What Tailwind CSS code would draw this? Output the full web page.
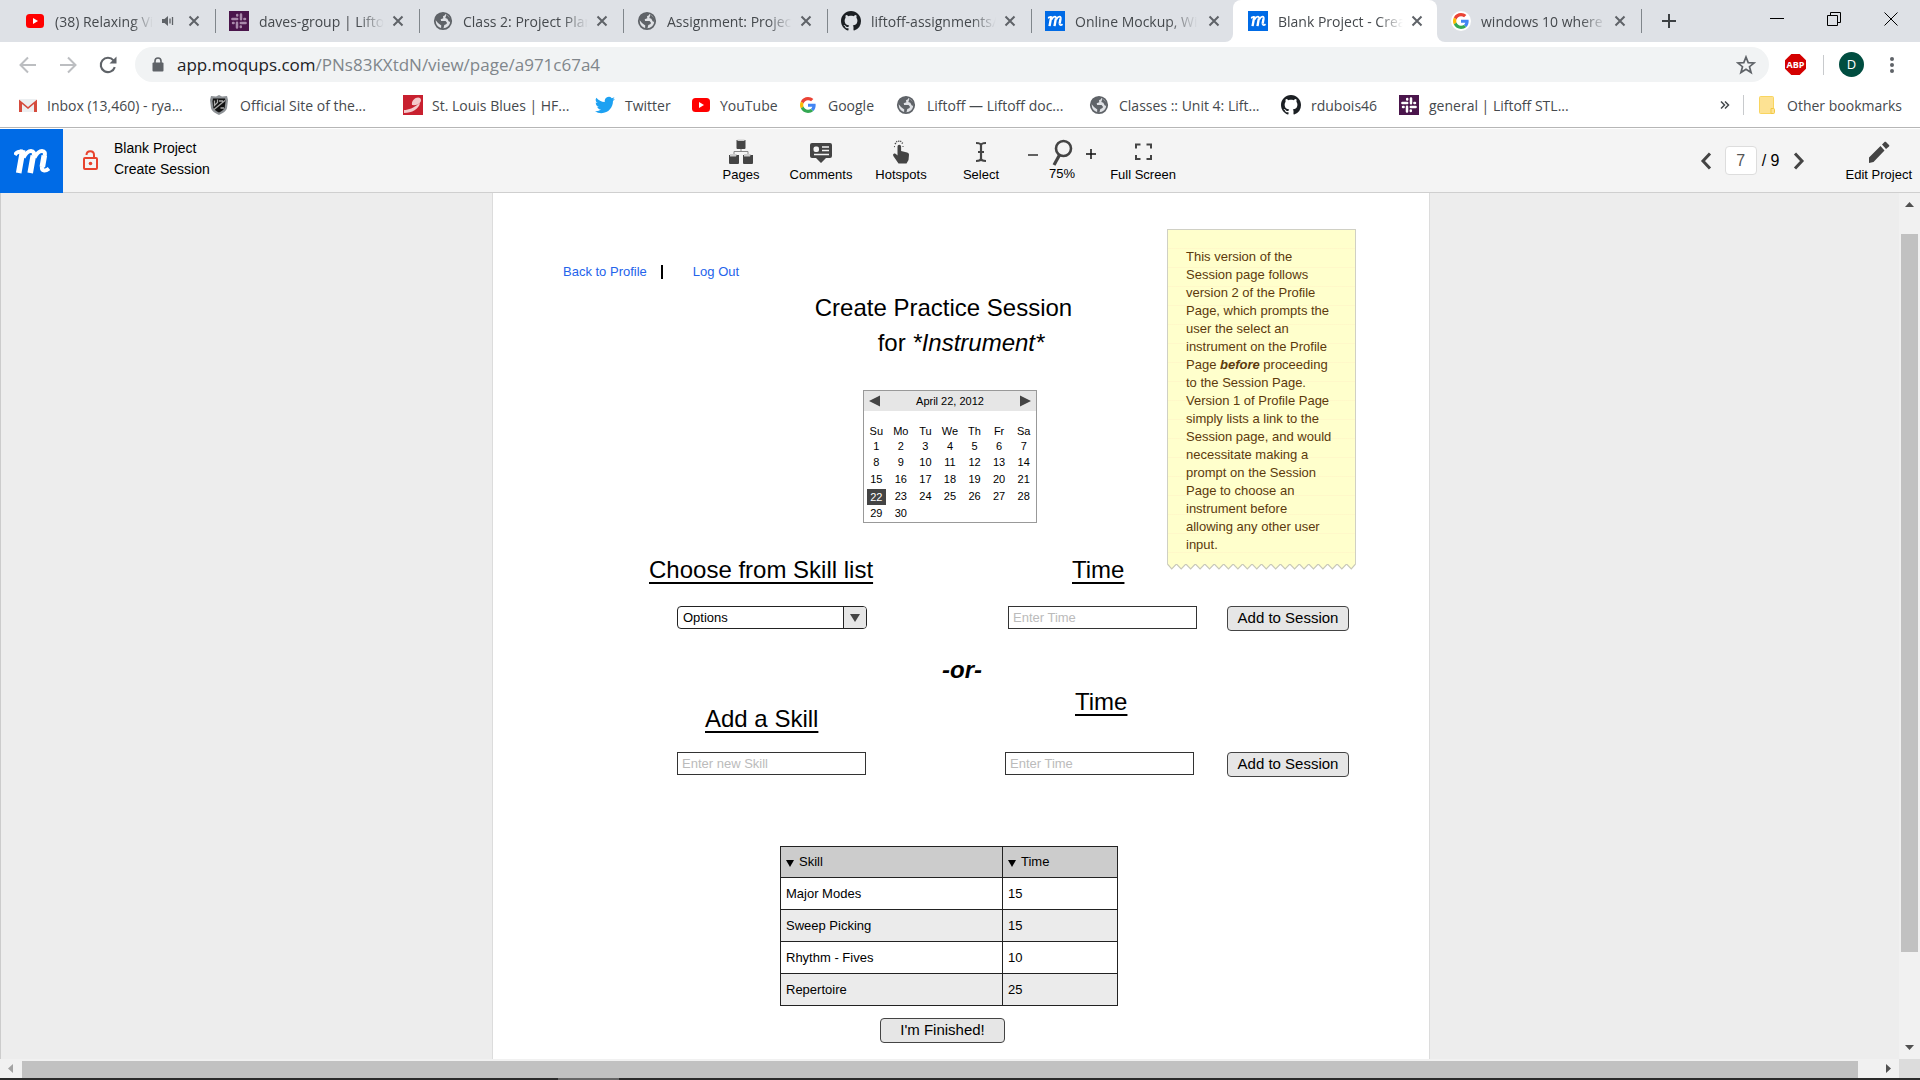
<!DOCTYPE html>
<html lang="en">
<head>
<meta charset="utf-8">
<title>Blank Project - Create Session</title>
<script src="https://cdn.jsdelivr.net/npm/@tailwindcss/browser@4"></script>
</head>
<body class="flex h-screen flex-col overflow-hidden bg-white font-['Liberation_Sans',Arial,sans-serif] text-black">

<!-- Shared icons -->
<svg class="hidden" aria-hidden="true">
  <symbol id="close" viewBox="0 0 12 12"><path d="M1.5 1.5l9 9M10.5 1.5l-9 9" stroke="#5f6368" stroke-width="2" fill="none"/></symbol>
  <symbol id="youtube" viewBox="0 0 20 20"><rect x="1" y="3" width="18" height="14" rx="3.5" fill="#f00"/><path d="M8 7l5 3-5 3z" fill="#fff"/></symbol>
  <symbol id="slack" viewBox="0 0 20 20"><rect width="20" height="20" fill="#4a154b"/><path d="M3.400 8h4.800M8.200 4v.6M12 3.400v4.800M16 8h-.6M16.600 12h-4.800M11.800 16v-.6M8 16.600v-4.800M4 12h.6" fill="none" stroke="#fff" stroke-width="2.500" stroke-linecap="round"/></symbol>
  <symbol id="slackdim" viewBox="0 0 20 20"><rect width="20" height="20" fill="#4a154b"/><path d="M3.400 8h4.800M8.200 4v.6M12 3.400v4.800M16 8h-.6M16.600 12h-4.800M11.800 16v-.6M8 16.600v-4.800M4 12h.6" fill="none" stroke="#a98aab" stroke-width="2.500" stroke-linecap="round"/></symbol>
  <symbol id="globe" viewBox="0 0 20 20"><circle cx="10" cy="10" r="8.2" fill="#dfe1e5" stroke="#5f6368" stroke-width="1.8"/><path d="M3 5.500C5 3 8 1.500 11.500 2l.8 2-2.300 1.300.3 1.900-2.600 1 .4 1.800h4.500l1.500 2-1 1.300-1.800.8-.8 3.200-1.700.8C8 18 8 16 8.300 14.500L5 12l-2.500-3zM13.500 3.500l3.800 3.700.5 3.800-2-.5-1.500-2.800-2-.6z" fill="#5f6368"/></symbol>
  <symbol id="github" viewBox="0 0 16 16"><path fill="#1b1f23" d="M8 0C3.580 0 0 3.580 0 8c0 3.540 2.290 6.530 5.470 7.590.4.070.55-.17.55-.38 0-.19-.01-.82-.01-1.490-2.010.37-2.530-.49-2.690-.94-.09-.23-.48-.94-.82-1.130-.28-.15-.68-.52-.01-.53.63-.01 1.080.58 1.230.82.72 1.210 1.870.87 2.330.66.07-.52.28-.87.51-1.070-1.780-.2-3.640-.89-3.640-3.950 0-.87.31-1.590.82-2.150-.08-.2-.36-1.020.08-2.120 0 0 .67-.21 2.200.82.64-.18 1.320-.27 2-.27s1.360.09 2 .27c1.530-1.040 2.200-.82 2.200-.82.44 1.100.16 1.920.08 2.120.51.56.82 1.270.82 2.150 0 3.070-1.870 3.750-3.650 3.950.29.25.54.73.54 1.480 0 1.070-.01 1.930-.01 2.200 0 .21.15.46.55.38A8.010 8.010 0 0 0 16 8c0-4.420-3.580-8-8-8z"/></symbol>
  <symbol id="google" viewBox="0 0 48 48"><path fill="#ea4335" d="M24 9.500c3.540 0 6.710 1.220 9.210 3.600l6.850-6.850C35.900 2.380 30.470 0 24 0 14.620 0 6.510 5.380 2.560 13.220l7.980 6.190C12.430 13.720 17.740 9.500 24 9.500z"/><path fill="#4285f4" d="M46.980 24.550c0-1.570-.15-3.090-.38-4.550H24v9.020h12.940c-.58 2.960-2.260 5.480-4.780 7.180l7.730 6c4.510-4.180 7.090-10.360 7.090-17.650z"/><path fill="#fbbc05" d="M10.530 28.590c-.48-1.450-.76-2.990-.76-4.590s.27-3.140.76-4.590l-7.980-6.190C.92 16.460 0 20.120 0 24s.92 7.540 2.560 10.780z"/><path fill="#34a853" d="M24 48c6.480 0 11.930-2.130 15.890-5.810l-7.730-6c-2.150 1.450-4.920 2.300-8.160 2.300-6.260 0-11.570-4.220-13.470-9.910l-7.980 6.190C6.510 42.620 14.620 48 24 48z"/></symbol>
  <!-- Product mark: slanted stems, thinner arches, entry and exit strokes -->
  <symbol id="mark" viewBox="0 0 36 28"><g fill="none" stroke="#fff" stroke-linejoin="round"><path d="M8.800 3L4.700 26M19.300 8.500L16.200 26M30.300 8.500L28.300 20" stroke-width="5.600"/><path d="M.8 8c1.500-2.600 4.500-3.600 8-3.400M9.500 10.500C12 6 14.500 4 17 4c2.800 0 3.300 2 2.600 5M20.500 10.500C23 6 25.500 4 28 4c2.800 0 3.300 2 2.600 5M28 19.500c-.6 4.500 3 5.300 7 2" stroke-width="4"/></g></symbol>
  <symbol id="mq" viewBox="0 0 20 20"><rect width="20" height="20" fill="#006be6"/><svg x="2.500" y="4" width="15.500" height="12"><use href="#mark"/></svg></symbol>
</svg>

<!-- Tab strip -->
<header class="flex h-[42px] shrink-0 bg-[#dee1e6] pl-[11px] font-['Open_Sans','Noto_Sans',sans-serif] text-[14px] text-[#45494d]">
  <div class="flex w-51 items-center pl-[14px]">
    <svg class="size-5 shrink-0"><use href="#youtube"/></svg>
    <span class="ml-[10px] w-[98px] overflow-hidden whitespace-nowrap [mask-image:linear-gradient(to_right,#000_78%,transparent)]">(38) Relaxing Violin</span>
    <svg class="ml-[8px] size-[14px] shrink-0" viewBox="0 0 14 14"><path d="M1 5h2.500L7 2v10L3.500 9H1z" fill="#5f6368"/><path d="M9 4.500v5M11.500 3v8" stroke="#5f6368" stroke-width="1.300"/></svg>
    <button class="ml-[13px]" aria-label="Close tab"><svg class="size-3"><use href="#close"/></svg></button>
  </div>
  <div class="flex w-51 items-center">
    <i class="h-6 w-px bg-[#80868b]"></i>
    <svg class="ml-[13px] size-5 shrink-0"><use href="#slackdim"/></svg>
    <span class="ml-[10px] w-[125px] overflow-hidden whitespace-nowrap [mask-image:linear-gradient(to_right,#000_80%,transparent)]">daves-group | Liftoff</span>
    <button class="ml-[8px]" aria-label="Close tab"><svg class="size-3"><use href="#close"/></svg></button>
  </div>
  <div class="flex w-51 items-center">
    <i class="h-6 w-px bg-[#80868b]"></i>
    <svg class="ml-[13px] size-5 shrink-0"><use href="#globe"/></svg>
    <span class="ml-[10px] w-[125px] overflow-hidden whitespace-nowrap [mask-image:linear-gradient(to_right,#000_80%,transparent)]">Class 2: Project Planning</span>
    <button class="ml-[8px]" aria-label="Close tab"><svg class="size-3"><use href="#close"/></svg></button>
  </div>
  <div class="flex w-51 items-center">
    <i class="h-6 w-px bg-[#80868b]"></i>
    <svg class="ml-[13px] size-5 shrink-0"><use href="#globe"/></svg>
    <span class="ml-[10px] w-[125px] overflow-hidden whitespace-nowrap [mask-image:linear-gradient(to_right,#000_80%,transparent)]">Assignment: Project</span>
    <button class="ml-[8px]" aria-label="Close tab"><svg class="size-3"><use href="#close"/></svg></button>
  </div>
  <div class="flex w-51 items-center">
    <i class="h-6 w-px bg-[#80868b]"></i>
    <svg class="ml-[13px] size-5 shrink-0"><use href="#github"/></svg>
    <span class="ml-[10px] w-[125px] overflow-hidden whitespace-nowrap [mask-image:linear-gradient(to_right,#000_80%,transparent)]">liftoff-assignments/</span>
    <button class="ml-[8px]" aria-label="Close tab"><svg class="size-3"><use href="#close"/></svg></button>
  </div>
  <div class="flex w-[194px] items-center">
    <i class="h-6 w-px bg-[#80868b]"></i>
    <svg class="ml-[13px] size-5 shrink-0"><use href="#mq"/></svg>
    <span class="ml-[10px] w-[125px] overflow-hidden whitespace-nowrap [mask-image:linear-gradient(to_right,#000_75%,transparent_98%)]">Online Mockup, Wireframe</span>
    <button class="ml-[8px]" aria-label="Close tab"><svg class="size-3"><use href="#close"/></svg></button>
  </div>
  <div class="flex bg-white"><i class="w-2 rounded-br-lg bg-[#dee1e6]"></i></div>
  <div class="flex bg-[#dee1e6]">
    <div class="flex w-51 items-center rounded-t-lg bg-white pl-[15px]">
      <svg class="size-5 shrink-0"><use href="#mq"/></svg>
      <span class="ml-[10px] w-[125px] overflow-hidden whitespace-nowrap [mask-image:linear-gradient(to_right,#000_80%,transparent)]">Blank Project - Create</span>
      <button class="ml-[8px]" aria-label="Close tab"><svg class="size-3"><use href="#close"/></svg></button>
    </div>
  </div>
  <div class="flex bg-white"><i class="w-2 rounded-bl-lg bg-[#dee1e6]"></i></div>
  <div class="flex w-[196px] items-center pl-[6px]">
    <span class="grid size-5 shrink-0 place-items-center rounded-full bg-white"><svg class="size-4"><use href="#google"/></svg></span>
    <span class="ml-[10px] w-[125px] overflow-hidden whitespace-nowrap [mask-image:linear-gradient(to_right,#000_80%,transparent)]">windows 10 where are</span>
    <button class="ml-[8px]" aria-label="Close tab"><svg class="size-3"><use href="#close"/></svg></button>
  </div>
  <div class="flex items-center">
    <i class="h-6 w-px bg-[#80868b]"></i>
    <button class="ml-[19px]" aria-label="New tab"><svg class="size-4" viewBox="0 0 16 16"><path d="M8 1v14M1 8h14" stroke="#3c4043" stroke-width="2"/></svg></button>
  </div>
  <div class="ml-auto flex h-[37px] items-center gap-[43px] pr-[22px]">
    <button aria-label="Minimize"><svg class="size-[14px]" viewBox="0 0 14 14"><path d="M0 6.500h14" stroke="#000"/></svg></button>
    <button aria-label="Restore"><svg class="size-[14px]" viewBox="0 0 14 14"><path d="M.5 3.500h10v10H.5zM3.500 3.500v-3h10v10h-3" fill="none" stroke="#000"/></svg></button>
    <button aria-label="Close"><svg class="size-[14px]" viewBox="0 0 14 14"><path d="M.5.5l13 13M13.500.5l-13 13" stroke="#000"/></svg></button>
  </div>
</header>

<!-- Address bar -->
<div class="flex h-[45px] shrink-0 items-center bg-white pl-[18px] font-['Open_Sans','Noto_Sans',sans-serif]">
  <button aria-label="Back"><svg class="size-5" viewBox="0 0 20 20"><path d="M18 10H3M10 2.500L2.500 10l7.500 7.500" fill="none" stroke="#bcbec1" stroke-width="2"/></svg></button>
  <button class="ml-5" aria-label="Forward"><svg class="size-5" viewBox="0 0 20 20"><path d="M2 10h15M10 2.500l7.500 7.500-7.500 7.500" fill="none" stroke="#bcbec1" stroke-width="2"/></svg></button>
  <button class="ml-5" aria-label="Reload"><svg class="size-5" viewBox="0 0 20 20"><path d="M16.800 12.200A7.200 7.200 0 1 1 15.500 5.300" fill="none" stroke="#5f6368" stroke-width="2.100"/><path d="M18.500 1.500v7h-7z" fill="#5f6368"/></svg></button>
  <div class="ml-[17px] flex h-[35px] flex-1 items-center rounded-full bg-[#f1f3f4] pr-[13px] pl-[17px]">
    <svg class="h-4 w-3 shrink-0" viewBox="0 0 12 16"><rect x=".5" y="5.500" width="11" height="9" rx="1" fill="#5f6368"/><path d="M3 6V4a3 3 0 0 1 6 0v2" fill="none" stroke="#5f6368" stroke-width="1.600"/></svg>
    <div class="ml-[13px] text-[17px] whitespace-nowrap text-[#80868b]"><span class="text-[#202124]">app.moqups.com</span>/PNs83KXtdN/view/page/a971c67a4</div>
    <button class="ml-auto" aria-label="Bookmark this page"><svg class="size-5" viewBox="0 0 20 20"><path d="M10 2l2.200 5.600 6 .3-4.700 3.800 1.600 5.800L10 14.200l-5.100 3.300 1.600-5.800L1.800 7.900l6-.3z" fill="none" stroke="#5f6368" stroke-width="1.700"/></svg></button>
  </div>
  <div class="ml-[16px] grid size-[21px] place-items-center bg-[#d40000] text-[9px] font-bold text-white [clip-path:polygon(30%_0,70%_0,100%_30%,100%_70%,70%_100%,30%_100%,0_70%,0_30%)]">ABP</div>
  <i class="ml-[17px] h-5 w-px bg-[#c8cacd]"></i>
  <button class="ml-[15px] size-[25px] rounded-full bg-[#004d40] text-[13px] text-white">D</button>
  <button class="mr-[18px] ml-[18px]" aria-label="Menu"><svg class="h-[18px] w-5" viewBox="0 0 20 18"><g fill="#5f6368"><circle cx="10" cy="3" r="2"/><circle cx="10" cy="9" r="2"/><circle cx="10" cy="15" r="2"/></g></svg></button>
</div>

<!-- Bookmarks bar -->
<nav class="flex h-[41px] shrink-0 items-center border-b border-[#b6b6b6] pb-1 pl-[18px] font-['Open_Sans','Noto_Sans',sans-serif] text-[14px] whitespace-nowrap text-[#45494d]">
  <a href="#" class="flex w-[191px] items-center gap-[9px]"><svg class="size-5" viewBox="0 0 20 20"><path d="M2 4h16v13H2z" fill="#eceff1"/><path d="M1 17V4.500L10 12l9-7.500V17h-3V9l-6 5-6-5v8z" fill="#d54b3d"/></svg>Inbox (13,460) - rya...</a>
  <a href="#" class="flex w-[194px] items-center gap-[11px]"><svg class="size-5" viewBox="0 0 20 20"><path d="M10 0l3 1.500L18 1l1 4-1 8c-.5 3-4 5-8 7-4-2-7.500-4-8-7L1 5l1-4 5 .5z" fill="#8e9296"/><path d="M4 3.500h12l.5 3-.8 6c-.5 2-3 3.700-5.700 5-2.700-1.300-5.200-3-5.700-5l-.8-6z" fill="#111"/><path d="M5 14.500l11-9M5.500 5.500v5l3-3v-3M10 6h4M11.500 13h3.500" fill="none" stroke="#aaa" stroke-width="1.300"/></svg>Official Site of the...</a>
  <a href="#" class="flex w-[192px] items-center gap-[9px]"><svg class="size-5" viewBox="0 0 20 20"><path d="M0 0h20v20H0z" fill="#c8202f"/><path d="M9 10C8 5 14 1 17 3c3 3-1 8-8 7zM1 15c5 0 9-2 16-7-1 6-8 10-16 10z" fill="#f4c9cb"/></svg>St. Louis Blues | HF...</a>
  <a href="#" class="flex w-[96px] items-center gap-[10px]"><svg class="size-5" viewBox="0 0 24 24"><path fill="#1da1f2" d="M23.950 4.570a10 10 0 0 1-2.820.77 4.960 4.960 0 0 0 2.160-2.720c-.95.55-2 .95-3.130 1.180a4.920 4.920 0 0 0-8.380 4.480C7.690 8.090 4.070 6.130 1.640 3.160a4.920 4.920 0 0 0 1.520 6.570 4.900 4.900 0 0 1-2.230-.61v.06a4.920 4.920 0 0 0 3.950 4.830 5 5 0 0 1-2.210.08 4.940 4.940 0 0 0 4.600 3.420A9.870 9.870 0 0 1 0 19.540a13.990 13.990 0 0 0 7.550 2.210c9.050 0 14-7.500 14-13.980 0-.21 0-.42-.02-.63a9.940 9.940 0 0 0 2.420-2.570z"/></svg>Twitter</a>
  <a href="#" class="flex w-[109px] items-center gap-[9px]"><svg class="size-5"><use href="#youtube"/></svg>YouTube</a>
  <a href="#" class="flex w-[96px] items-center gap-[12px]"><svg class="size-4"><use href="#google"/></svg>Google</a>
  <a href="#" class="flex w-[193px] items-center gap-[11px]"><svg class="size-5"><use href="#globe"/></svg>Liftoff — Liftoff doc...</a>
  <a href="#" class="flex w-[192px] items-center gap-[10px]"><svg class="size-5"><use href="#globe"/></svg>Classes :: Unit 4: Lift...</a>
  <a href="#" class="flex w-[118px] items-center gap-[10px]"><svg class="size-5"><use href="#github"/></svg>rdubois46</a>
  <a href="#" class="flex items-center gap-[10px]"><svg class="size-5"><use href="#slack"/></svg>general | Liftoff STL...</a>
  <button class="ml-auto" aria-label="More bookmarks"><svg class="size-[10px]" viewBox="0 0 10 10"><path d="M1 1.500L4.500 5 1 8.500M5 1.500L8.500 5 5 8.500" fill="none" stroke="#45494d" stroke-width="1.500"/></svg></button>
  <i class="ml-[13px] h-5 w-px bg-[#c8cacd]"></i>
  <a href="#" class="mr-[18px] ml-[15px] flex items-center gap-[12px]"><svg class="h-5 w-4" viewBox="0 0 16 20"><rect x=".5" y="1.500" width="14" height="17" rx="1" fill="#fde293" stroke="#f9d55f"/><path d="M12 13.500h2.500a1 1 0 0 1 1 1v3a1 1 0 0 1-1 1H12z" fill="#fde293" stroke="#f3c944"/></svg>Other bookmarks</a>
</nav>

<!-- Viewer toolbar -->
<div class="mt-px flex h-[64px] shrink-0 border-b border-[#cfcfcf] bg-[#f4f4f4]">
  <div class="flex flex-1">
    <a href="#" class="-mb-px grid w-[63px] place-items-center bg-[#006be6]" aria-label="Home"><svg class="h-7 w-9"><use href="#mark"/></svg></a>
    <svg class="mt-[20px] ml-[18px] h-[22px] w-[18px]" viewBox="0 0 18 22"><rect x="3" y="9" width="13" height="11" rx="1" fill="none" stroke="#e8432e" stroke-width="2"/><path d="M5.500 6C5.500 1 13 1 13 6v3" fill="none" stroke="#e8432e" stroke-width="2"/><circle cx="9.500" cy="14.500" r="1.800" fill="#e8432e"/></svg>
    <div class="ml-[15px] pt-[9px] text-[14px] leading-[21px]"><p>Blank Project</p><p>Create Session</p></div>
  </div>
  <div class="mr-[36px] flex text-[13px] leading-4">
    <button class="flex w-20 flex-col items-center pt-[9px]"><svg class="h-7 w-6" viewBox="0 0 24 28"><g fill="#444"><path d="M7.500 2h9v8a1 1 0 0 1-1 1h-7a1 1 0 0 1-1-1zM0 17h10v8a1 1 0 0 1-1 1H1a1 1 0 0 1-1-1zM14 17h10v8a1 1 0 0 1-1 1h-8a1 1 0 0 1-1-1z"/></g><path d="M12 11v2.500M5 17v-3.500h14V17" fill="none" stroke="#888"/><path d="M8.500 1.500h7v1.500h-7zM1 16h7l-1 2.500H1zM15 16h7l-1 2.500h-6z" fill="#ccc"/></svg><span class="mt-[1px]">Pages</span></button>
    <button class="flex w-20 flex-col items-center pt-[9px]"><svg class="h-7 w-6" viewBox="0 0 24 28"><path d="M3 5h18a2 2 0 0 1 2 2v11a2 2 0 0 1-2 2h-4l-5 5-5-5H3a2 2 0 0 1-2-2V7a2 2 0 0 1 2-2z" fill="#444"/><rect x="4.500" y="8.500" width="5.500" height="5.500" rx="2" fill="#f4f4f4"/><path d="M13 9h7M13 12.500h7M5 16.500h15" stroke="#f4f4f4" stroke-width="1.600"/></svg><span class="mt-[1px]">Comments</span></button>
    <button class="flex w-20 flex-col items-center pt-[9px]"><svg class="h-7 w-6" viewBox="0 0 24 28"><path d="M8.500 8.500a1.800 1.800 0 0 1 3.600 0V13l6 1.500c1.500.4 2 1.200 1.900 2.500l-.5 5-2 3.500h-8L5 19c-1.500-2-1-3.200.2-3.500.8-.2 1.600.3 3.300 2z" fill="#444"/><path d="M5 8.500l1 .2M5.800 5l1.200 1M9.800 2.500v1.600M13.800 4.500l-1 1.200M14.500 8.500h-1M7.500 3l.5 1.200M12 2.800l-.5 1.200" stroke="#444" stroke-width="1.100"/></svg><span class="mt-[1px]">Hotspots</span></button>
    <button class="flex w-20 flex-col items-center pt-[9px]"><svg class="h-7 w-6" viewBox="0 0 24 28"><path d="M7 5c3 0 5 .5 5 2.500v13c0 2-2 2.500-5 2.500M17 5c-3 0-5 .5-5 2.500v13c0 2 2 2.500 5 2.500M9 14h6" fill="none" stroke="#444" stroke-width="2.200"/></svg><span class="mt-[1px]">Select</span></button>
    <div class="flex w-[82px] justify-center gap-3 pt-[9px]">
      <button class="mt-[8px] h-4" aria-label="Zoom out"><svg class="size-[10px]" viewBox="0 0 10 10"><path d="M0 6h10" stroke="#111" stroke-width="1.300"/></svg></button>
      <div class="flex w-6 flex-col items-center"><svg class="h-7 w-6 shrink-0" viewBox="0 0 24 28"><circle cx="13.500" cy="10.500" r="7.500" fill="none" stroke="#444" stroke-width="2.600"/><path d="M9.500 17L4 27" stroke="#444" stroke-width="3.200"/></svg><span>75%</span></div>
      <button class="mt-[8px] h-4" aria-label="Zoom in"><svg class="size-[10px]" viewBox="0 0 10 10"><path d="M0 5h10M5 0v10" stroke="#111" stroke-width="1.500"/></svg></button>
    </div>
    <button class="flex w-20 flex-col items-center pt-[9px]"><svg class="h-7 w-6" viewBox="0 0 24 28"><path d="M9.500 6.500H5v4M15.500 6.500H20v4M9.500 21H5v-4M15.500 21H20v-4" fill="none" stroke="#444" stroke-width="2"/></svg><span class="mt-[1px]">Full Screen</span></button>
  </div>
  <div class="flex flex-1 justify-end">
    <div class="mr-[41px] flex items-center">
      <button aria-label="Previous page"><svg class="h-[18px] w-3" viewBox="0 0 12 18"><path d="M10 1.500L3 9l7 7.500" fill="none" stroke="#444" stroke-width="3"/></svg></button>
      <input aria-label="Page number" value="7" class="ml-[13px] h-[29px] w-8 rounded border border-[#ddd] bg-white text-center text-[16px] text-[#555]">
      <span class="ml-[5px] text-[16px]">/ 9</span>
      <button class="ml-[13px]" aria-label="Next page"><svg class="h-[18px] w-3" viewBox="0 0 12 18"><path d="M2 1.500L9 9l-7 7.500" fill="none" stroke="#444" stroke-width="3"/></svg></button>
    </div>
    <button class="mr-[8px] flex flex-col items-center pt-[9px] text-[13px] leading-4"><svg class="h-7 w-6" viewBox="0 0 24 28"><path d="M2 25v-5.500L13.500 8l4 4.500L6.500 24zM15 6.500l2.500-2.500c.5-.5 1-.5 1.500 0l3 3c.5.500.5 1 0 1.500L19 11z" fill="#444"/></svg><span class="mt-[1px]">Edit Project</span></button>
  </div>
</div>

<!-- Canvas -->
<div class="flex min-h-0 flex-1">
  <main class="flex min-w-0 flex-1 overflow-hidden border-l border-[#ccc] bg-[#ededed]">
    <div class="flex-[491]"></div>
    <section class="relative w-[938px] shrink-0 border-x border-[#dcdcdc] bg-white">
      <nav class="flex items-center pt-[70px] pl-[70px] text-[13px] leading-[18px] text-[#2463eb]">
        <a href="#">Back to Profile</a><i class="ml-[14px] h-[14px] w-[2px] bg-black"></i><a href="#" class="ml-[30px]">Log Out</a>
      </nav>
      <h1 class="mt-[9px] text-center text-[24px] leading-[35px]"><span class="block pr-[35px]">Create Practice Session</span>for <em>*Instrument*</em></h1>

      <div class="mt-[30px] ml-[370px] w-[174px] border border-[#999] text-[11px]">
        <div class="flex h-[20px] items-center justify-between bg-[#e6e6e6] px-[5px]">
          <button aria-label="Previous month"><svg class="h-3 w-[11px]" viewBox="0 0 11 12"><path d="M0 6l11-5.500v11z" fill="#444"/></svg></button>
          <span>April 22, 2012</span>
          <button aria-label="Next month"><svg class="h-3 w-[11px]" viewBox="0 0 11 12"><path d="M11 6L0 .5v11z" fill="#444"/></svg></button>
        </div>
        <table class="mt-[13px] w-full table-fixed border-collapse text-center leading-[17px]">
          <thead><tr class="leading-[15px]"><th class="p-0 font-normal">Su</th><th class="p-0 font-normal">Mo</th><th class="p-0 font-normal">Tu</th><th class="p-0 font-normal">We</th><th class="p-0 font-normal">Th</th><th class="p-0 font-normal">Fr</th><th class="p-0 font-normal">Sa</th></tr></thead>
          <tbody>
            <tr class="leading-[15px]"><td>1</td><td>2</td><td>3</td><td>4</td><td>5</td><td>6</td><td>7</td></tr>
            <tr><td>8</td><td>9</td><td>10</td><td>11</td><td>12</td><td>13</td><td>14</td></tr>
            <tr><td>15</td><td>16</td><td>17</td><td>18</td><td>19</td><td>20</td><td>21</td></tr>
            <tr><td class="px-[3px]"><span class="block bg-[#444] leading-4 text-white">22</span></td><td>23</td><td>24</td><td>25</td><td>26</td><td>27</td><td>28</td></tr>
            <tr><td>29</td><td>30</td><td></td><td></td><td></td><td></td><td></td></tr>
          </tbody>
        </table>
      </div>

      <form class="mt-[33px] flex items-start">
        <div class="ml-[156px] w-[218px]">
          <label for="skill" class="block text-[24px] leading-7 whitespace-nowrap underline decoration-2 underline-offset-4">Choose from Skill list</label>
          <div class="relative mt-[22px] ml-7 h-[23px] w-[190px]">
            <select id="skill" class="block h-full w-full appearance-none rounded border border-[#222] bg-white pl-[5px] text-[13px] leading-4"><option>Options</option></select>
            <span class="pointer-events-none absolute inset-y-px right-px grid w-[23px] place-items-center rounded-r-[3px] border-l border-[#222] bg-[#e6e6e6]"><svg class="h-2 w-[10px]" viewBox="0 0 10 8"><path d="M0 0h10L5 8z" fill="#444"/></svg></span>
          </div>
        </div>
        <div class="ml-[141px] w-[189px]">
          <label for="time1" class="ml-16 block text-[24px] leading-7 underline decoration-2 underline-offset-4">Time</label>
          <input id="time1" placeholder="Enter Time" class="mt-[22px] block h-[23px] w-full border border-[#333] bg-white px-1 text-[13px] placeholder:text-[#bbb]">
        </div>
        <button type="button" class="mt-[50px] ml-[30px] h-[25px] w-[122px] rounded border border-[#444] bg-[#e6e6e6] pb-px text-[15px] leading-5">Add to Session</button>
      </form>

      <p class="mt-[25px] pl-[2px] text-center text-[24px] leading-7 font-bold italic">-or-</p>

      <form class="mt-[4px] flex items-end">
        <div class="ml-[184px] w-[190px] pb-[2px]">
          <label for="newskill" class="ml-7 block text-[24px] leading-7 underline decoration-2 underline-offset-4">Add a Skill</label>
          <input id="newskill" placeholder="Enter new Skill" class="mt-[19px] block h-[23px] w-[189px] border border-[#333] bg-white px-1 text-[13px] placeholder:text-[#bbb]">
        </div>
        <div class="ml-[138px] w-[189px] pb-[2px]">
          <label for="time2" class="ml-[70px] block text-[24px] leading-7 underline decoration-2 underline-offset-4">Time</label>
          <input id="time2" placeholder="Enter Time" class="mt-[36px] block h-[23px] w-full border border-[#333] bg-white px-1 text-[13px] placeholder:text-[#bbb]">
        </div>
        <button type="button" class="ml-[33px] h-[25px] w-[122px] rounded border border-[#444] bg-[#e6e6e6] pb-px text-[15px] leading-5">Add to Session</button>
      </form>

      <table class="mt-[69px] ml-[287px] w-[338px] border-collapse text-left text-[13px]">
        <thead><tr class="h-[31px] bg-[#ccc]">
          <th class="w-[222px] border border-[#222] px-[5px] py-0 font-normal"><span class="flex items-center gap-[5px]"><svg class="mt-[2px] h-[7px] w-2" viewBox="0 0 8 7"><path d="M0 0h8L4 7z"/></svg>Skill</span></th>
          <th class="border border-[#222] px-[5px] py-0 font-normal"><span class="flex items-center gap-[5px]"><svg class="mt-[2px] h-[7px] w-2" viewBox="0 0 8 7"><path d="M0 0h8L4 7z"/></svg>Time</span></th>
        </tr></thead>
        <tbody>
          <tr class="h-8"><td class="border border-[#222] px-[5px] py-0">Major Modes</td><td class="border border-[#222] px-[5px] py-0">15</td></tr>
          <tr class="h-8 bg-[#ebebeb]"><td class="border border-[#222] px-[5px] py-0">Sweep Picking</td><td class="border border-[#222] px-[5px] py-0">15</td></tr>
          <tr class="h-8"><td class="border border-[#222] px-[5px] py-0">Rhythm - Fives</td><td class="border border-[#222] px-[5px] py-0">10</td></tr>
          <tr class="h-8 bg-[#ebebeb]"><td class="border border-[#222] px-[5px] py-0">Repertoire</td><td class="border border-[#222] px-[5px] py-0">25</td></tr>
        </tbody>
      </table>
      <button type="button" class="mt-[12px] ml-[387px] block h-[25px] w-[125px] rounded border border-[#444] bg-[#e6e6e6] pb-px text-[15px] leading-5">I'm Finished!</button>

      <!-- Sticky note lying over the mockup -->
      <aside class="absolute top-[36px] left-[674px] w-[189px] text-[13px] leading-[18px] text-[#5c3a0c]">
        <div class="border border-b-0 border-[#d0d0c4] bg-[#ffffcc] bg-[repeating-linear-gradient(to_bottom,transparent_0_18px,#ffeec466_18px_19px)] pt-[18px] pr-5 pb-[10px] pl-[18px]">This version of the Session page follows version 2 of the Profile Page, which prompts the user the select an instrument on the Profile Page <b><i>before</i></b> proceeding to the Session Page. Version 1 of Profile Page simply lists a link to the Session page, and would necessitate making a prompt on the Session Page to choose an instrument before allowing any other user input.</div>
        <svg class="block h-[6px] w-full" viewBox="0 0 200 6" preserveAspectRatio="none"><path d="M.5 0l4.500 5 5-5 5 5 5-5 5 5 5-5 5 5 5-5 5 5 5-5 5 5 5-5 5 5 5-5 5 5 5-5 5 5 5-5 5 5 5-5 5 5 5-5 5 5 5-5 5 5 5-5 5 5 5-5 5 5 5-5 5 5 5-5 5 5 5-5 5 5 5-5 5 5 5-5 5 5 4.500-5" fill="#ffffcc" stroke="#c8c8b8" stroke-width="1.200"/></svg>
      </aside>
    </section>
    <div class="flex-[469]"></div>
  </main>
  <!-- Vertical scrollbar -->
  <div class="flex w-[21px] shrink-0 flex-col items-center bg-[#f1f1f1]">
    <svg class="mt-[9px] h-[5px] w-[9px] shrink-0" viewBox="0 0 9 5"><path d="M0 5h9L4.500 0z" fill="#505050"/></svg>
    <div class="mt-[27px] w-[17px] flex-[719] bg-[#c1c1c1]"></div>
    <div class="flex-[93]"></div>
    <svg class="mb-[9px] h-[5px] w-[9px] shrink-0" viewBox="0 0 9 5"><path d="M0 0h9L4.500 5z" fill="#505050"/></svg>
  </div>
</div>

<!-- Horizontal scrollbar -->
<div class="flex h-[19px] shrink-0 items-center bg-[#f1f1f1]">
  <svg class="ml-[8px] h-[9px] w-[5px]" viewBox="0 0 5 9"><path d="M5 0v9L0 4.500z" fill="#a3a3a3"/></svg>
  <div class="mt-[2px] ml-[9px] h-[17px] flex-1 bg-[#c1c1c1]"></div>
  <svg class="mr-2 ml-7 h-[9px] w-[5px]" viewBox="0 0 5 9"><path d="M0 0v9l5-4.500z" fill="#505050"/></svg>
  <div class="h-full w-[21px] bg-[#dcdcdc]"></div>
</div>
<div class="flex h-[2px] shrink-0 bg-[#2b2b2b]"><i class="ml-[558px] w-[61px] bg-[#666]"></i></div>
</body>
</html>
